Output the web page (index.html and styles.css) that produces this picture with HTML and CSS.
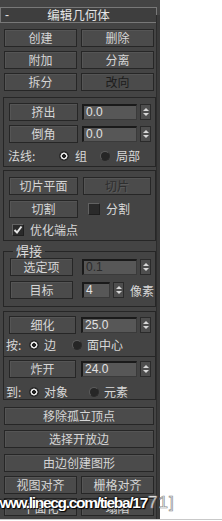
FILE: index.html
```html
<!DOCTYPE html>
<html>
<head>
<meta charset="utf-8">
<link rel="stylesheet" href="styles.css">
</head>
<body>
<div class="stage">
  <div class="panel">
    <div class="header"><span class="minus">-</span><span class="title">编辑几何体</span></div>
    <div class="grid2">
      <div class="btn">创建</div><div class="btn">删除</div>
      <div class="btn">附加</div><div class="btn">分离</div>
      <div class="btn">拆分</div><div class="btn dark">改向</div>
    </div>

    <div class="box box1">
      <div class="row">
        <div class="btn sbtn">挤出</div>
        <div class="field">0.0</div>
        <div class="spin"><i class="up"></i><i class="dn"></i></div>
      </div>
      <div class="row gap4">
        <div class="btn sbtn">倒角</div>
        <div class="field">0.0</div>
        <div class="spin"><i class="up"></i><i class="dn"></i></div>
      </div>
      <div class="radios r-normal">
        <span class="lbl">法线:</span>
        <span class="radio on"></span><span class="rl">组</span>
        <span class="radio off"></span><span class="rl">局部</span>
      </div>
    </div>

    <div class="box box2">
      <div class="row">
        <div class="btn sbtn">切片平面</div>
        <div class="btn sbtn2 dim">切片</div>
      </div>
      <div class="row gap5">
        <div class="btn sbtn">切割</div>
        <span class="check"></span><span class="cl">分割</span>
      </div>
      <div class="checkrow">
        <span class="check on"><svg width="10" height="10" viewBox="0 0 10 10"><path d="M1.5 5 L4 7.5 L8.5 1.5" fill="none" stroke="#e6e6e6" stroke-width="2"/></svg></span><span class="cl">优化端点</span>
      </div>
    </div>

    <fieldset class="weld">
      <legend>焊接</legend>
      <div class="row">
        <div class="btn wbtn">选定项</div>
        <div class="field wfield dimtext">0.1</div>
        <div class="spin"><i class="up"></i><i class="dn"></i></div>
      </div>
      <div class="row gap5">
        <div class="btn wbtn">目标</div>
        <div class="field small">4</div>
        <div class="spin"><i class="up"></i><i class="dn"></i></div>
        <span class="unit">像素</span>
      </div>
    </fieldset>

    <div class="box box3">
      <div class="sec sec-a">
        <div class="row">
          <div class="btn tbtn">细化</div>
          <div class="field wfield">25.0</div>
          <div class="spin"><i class="up"></i><i class="dn"></i></div>
        </div>
        <div class="radios r-by">
          <span class="lbl">按:</span>
          <span class="radio on"></span><span class="rl">边</span>
          <span class="radio off"></span><span class="rl">面中心</span>
        </div>
      </div>
      <div class="sec sec-b">
        <div class="row">
          <div class="btn tbtn">炸开</div>
          <div class="field wfield">24.0</div>
          <div class="spin"><i class="up"></i><i class="dn"></i></div>
        </div>
        <div class="radios r-to">
          <span class="lbl">到:</span>
          <span class="radio on"></span><span class="rl">对象</span>
          <span class="radio off"></span><span class="rl">元素</span>
        </div>
      </div>
    </div>

    <div class="wide">
      <div class="btn">移除孤立顶点</div>
      <div class="btn">选择开放边</div>
      <div class="btn">由边创建图形</div>
    </div>
    <div class="grid2 last">
      <div class="btn">视图对齐</div><div class="btn">栅格对齐</div>
      <div class="btn low">平面化</div><div class="btn low">塌陷</div>
    </div>
    <div class="rail"></div>
  </div>
  <div class="blank"></div>
  <div class="watermark">www.linecg.com/tieba/17<span class="hollow">71]</span></div>
</div>
<div class="baseline"></div>
</body>
</html>
```

FILE: styles.css
```css
html, body {
  margin: 0;
  padding: 0;
  background: #ffffff;
}
body {
  width: 222px;
  height: 521px;
  overflow: hidden;
  font-family: "Noto Sans CJK SC", "Noto Sans", sans-serif;
  font-size: 12px;
  color: #d8d8d8;
}
.stage {
  position: relative;
  display: flex;
  height: 519px;
}
.baseline {
  height: 1px;
  background: #c9c9c9;
}
.panel {
  position: relative;
  width: 160px;
  height: 519px;
  background: #444444;
  padding-top: 7px;
  box-sizing: border-box;
  overflow: hidden;
}
.rail {
  position: absolute;
  right: 0;
  top: 15px;
  bottom: 0;
  width: 3px;
  background: #3a3a3a;
  border-left: 1px solid #2c2c2c;
}
.blank {
  flex: 1;
  background: #fff;
}
.header {
  height: 16px;
  margin-right: 3px;
  box-sizing: border-box;
  border: 1px solid #787878;
  background: #3e3e3e;
  display: flex;
  align-items: center;
  line-height: 14px;
  color: #e4e4e4;
}
.minus {
  width: 10px;
  padding-left: 4px;
  font-family: "Liberation Sans", sans-serif;
}
.title {
  flex: 1;
  text-align: center;
  padding-right: 14px;
  font-size: 12.5px;
}
.btn {
  box-sizing: border-box;
  height: 18px;
  border: 1px solid #262626;
  background: #4b4b4b;
  box-shadow: inset 1px 1px 0 #555;
  display: flex;
  align-items: center;
  justify-content: center;
  line-height: 14px;
  color: #d6d6d6;
  white-space: nowrap;
}
.btn.dark { color: #1c1c1c; }
.btn.dim { color: #2e2e2e; text-shadow: 1px 1px 0 #5a5a5a; }
.btn.low { align-items: flex-end; padding-bottom: 0; }
.grid2 {
  display: grid;
  grid-template-columns: 73px 73px;
  column-gap: 4px;
  row-gap: 4px;
  margin: 6px 0 0 4px;
}
.grid2.last { margin-top: 4px; }
.box {
  margin-left: 3px;
  width: 153px;
  box-sizing: border-box;
  border: 1px solid #262626;
}
.row {
  display: flex;
  align-items: center;
}
.gap4 { margin-top: 4px; }
.gap5 { margin-top: 5px; }
.box1 {
  margin-top: 6px;
  padding: 5px 0 3px 5px;
}
.sbtn { width: 69px; }
.sbtn2 { width: 68px; margin-left: 5px; }
.field {
  box-sizing: border-box;
  width: 55px;
  height: 16px;
  margin-left: 4px;
  background: #575757;
  border-top: 2px solid #1a1a1a;
  border-left: 2px solid #1a1a1a;
  border-right: 1px solid #3a3a3a;
  border-bottom: 1px solid #3a3a3a;
  font-family: "Liberation Sans", sans-serif;
  font-size: 12px;
  line-height: 12px;
  padding-left: 2px;
  color: #e2e2e2;
}
.field.dimtext { color: #2a2a2a; }
.spin {
  box-sizing: border-box;
  width: 11px;
  height: 16px;
  margin-left: 3px;
  border: 1px solid #2a2a2a;
  background: #4e4e4e;
  display: flex;
  flex-direction: column;
  align-items: center;
  justify-content: center;
  gap: 2px;
}
.spin i {
  display: block;
  width: 0;
  height: 0;
  border-left: 3px solid transparent;
  border-right: 3px solid transparent;
}
.spin .up { border-bottom: 3px solid #d8d8d8; }
.spin .dn { border-top: 3px solid #d8d8d8; }
.radios {
  display: flex;
  align-items: center;
  height: 14px;
  line-height: 14px;
}
.radios .lbl, .radios .rl { flex: none; }
.radio {
  box-sizing: border-box;
  width: 10px;
  height: 10px;
  border-radius: 50%;
  flex: none;
}
.radio.on {
  background: radial-gradient(circle, #1e1e1e 0 1.6px, #e6e6e6 2.2px 3.2px, #2a2a2a 3.8px);
}
.radio.off {
  background: #262626;
  border: 1px solid #5c5c5c;
  border-bottom-color: #2b2b2b;
  border-right-color: #2b2b2b;
}
.r-normal { margin-top: 6px; margin-left: -1px; }
.r-normal .lbl { width: 51px; }
.r-normal .rl { margin-left: 6px; }
.r-normal .radio.off { margin-left: 11px; }
.r-normal .rl:nth-child(3) { width: 14px; }
.box2 {
  margin-top: 3px;
  padding: 6px 0 3px 5px;
}
.check {
  box-sizing: border-box;
  width: 12px;
  height: 12px;
  margin-left: 10px;
  background: #2a2a2a;
  border: 1px solid #626262;
  border-bottom-color: #1e1e1e;
  border-right-color: #1e1e1e;
  display: inline-flex;
  align-items: center;
  justify-content: center;
}
.cl { margin-left: 6px; line-height: 14px; }
.checkrow {
  display: flex;
  align-items: center;
  margin-top: 5px;
  height: 14px;
}
.checkrow .check { margin-left: 3px; }
.weld {
  margin: 3px 0 0 3px;
  width: 153px;
  box-sizing: border-box;
  border: 1px solid #262626;
  padding: 0 0 7px 6px;
  min-width: 0;
}
.weld legend {
  padding: 0 3px;
  margin-left: 3px;
  height: 14px;
  line-height: 14px;
  font-size: 13px;
  color: #dcdcdc;
}
.wbtn { width: 63px; }
.wfield { margin-left: 9px; width: 55px; }
.weld .wfield { margin-left: 9px; }
.field.small { width: 28px; margin-left: 9px; }
.unit { margin-left: 6px; }
.box3 {
  margin-top: 4px;
  padding: 0;
}
.sec { padding-left: 5px; }
.sec-a { padding-top: 4px; padding-bottom: 4px; }
.sec-b { border-top: 1px solid #262626; padding-top: 3px; }
.tbtn { width: 67px; }
.box3 .wfield { margin-left: 5px; width: 56px; }
.r-by, .r-to { margin-left: -3px; margin-top: 4px; }
.r-to { margin-top: 7px; }
.r-by .lbl, .r-to .lbl { width: 23px; }
.r-by .rl, .r-to .rl { margin-left: 5px; }
.r-by .rl:nth-child(3) { width: 12px; }
.r-by .radio.off { margin-left: 16px; }
.r-to .rl:nth-child(3) { width: 24px; }
.r-to .radio.off { margin-left: 21px; }
.wide {
  display: flex;
  flex-direction: column;
  gap: 5px;
  margin: 7px 0 0 4px;
  width: 150px;
}
.wide .btn:nth-child(3) { margin-top: 1px; }
.watermark {
  position: absolute;
  left: -6px;
  top: 495px;
  font-family: "Liberation Sans", sans-serif;
  font-weight: bold;
  font-size: 15.5px;
  line-height: 16px;
  color: #ffffff;
  letter-spacing: -1.3px;
  text-shadow: 0 0 2px #000, 0 0 2px #000, 1px 1px 1px #000;
  white-space: nowrap;
}
.hollow {
  font-weight: normal;
  font-size: 17px;
  letter-spacing: 1px;
  margin-left: 1px;
  color: #ffffff;
  -webkit-text-stroke: 0.7px #8a8a8a;
  text-shadow: none;
}
```
